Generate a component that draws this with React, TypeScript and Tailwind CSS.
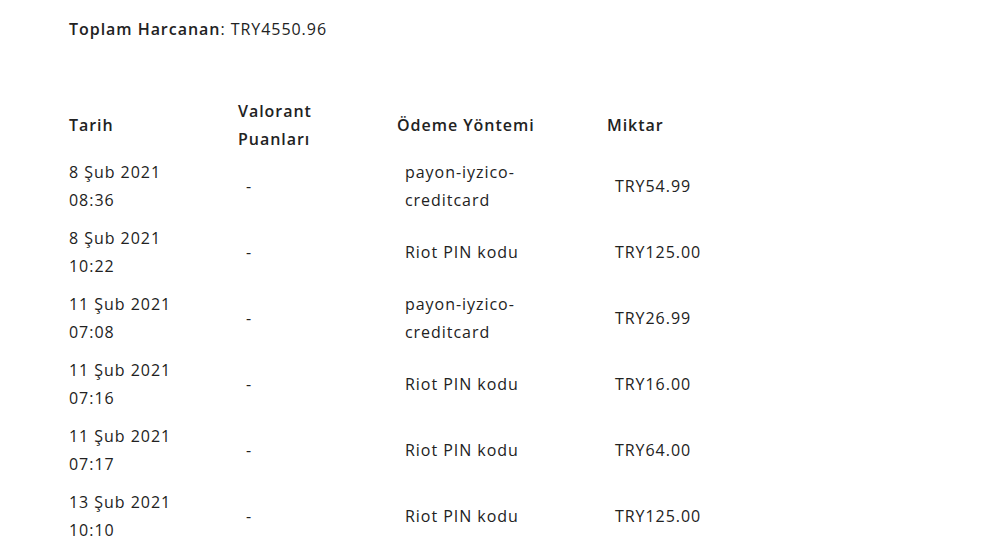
import React from 'react'

type Row = {
  date: string
  time: string
  points: string
  method: string[]
  amount: string
}

const rows: Row[] = [
  { date: '8 Şub 2021', time: '08:36', points: '-', method: ['payon-iyzico-', 'creditcard'], amount: 'TRY54.99' },
  { date: '8 Şub 2021', time: '10:22', points: '-', method: ['Riot PIN kodu'], amount: 'TRY125.00' },
  { date: '11 Şub 2021', time: '07:08', points: '-', method: ['payon-iyzico-', 'creditcard'], amount: 'TRY26.99' },
  { date: '11 Şub 2021', time: '07:16', points: '-', method: ['Riot PIN kodu'], amount: 'TRY16.00' },
  { date: '11 Şub 2021', time: '07:17', points: '-', method: ['Riot PIN kodu'], amount: 'TRY64.00' },
  { date: '13 Şub 2021', time: '10:10', points: '-', method: ['Riot PIN kodu'], amount: 'TRY125.00' },
]

const cols = 'grid grid-cols-[169px_159px_210px_200px]'

export default function App() {
  return (
    <div className="min-h-screen bg-white pl-[69px] pt-[15px] font-['Open_Sans','Liberation_Sans',sans-serif] text-[16px] leading-[28px] tracking-[0.06em] text-[#222222]">
      <p>
        <span className="font-semibold">Toplam Harcanan</span>: TRY4550.96
      </p>

      <div className="mt-[54px]">
        <div className={`${cols} items-center font-semibold`}>
          <div>Tarih</div>
          <div>
            <span className="block">Valorant</span>
            <span className="block">Puanları</span>
          </div>
          <div>Ödeme Yöntemi</div>
          <div>Miktar</div>
        </div>

        {rows.map((r, i) => (
          <div key={i} className={`${cols} items-center py-[5px]`}>
            <div>
              <span className="block">{r.date}</span>
              <span className="block">{r.time}</span>
            </div>
            <div className="pl-2">{r.points}</div>
            <div className="pl-2">
              {r.method.map((m) => (
                <span key={m} className="block">
                  {m}
                </span>
              ))}
            </div>
            <div className="pl-2">{r.amount}</div>
          </div>
        ))}
      </div>
    </div>
  )
}
